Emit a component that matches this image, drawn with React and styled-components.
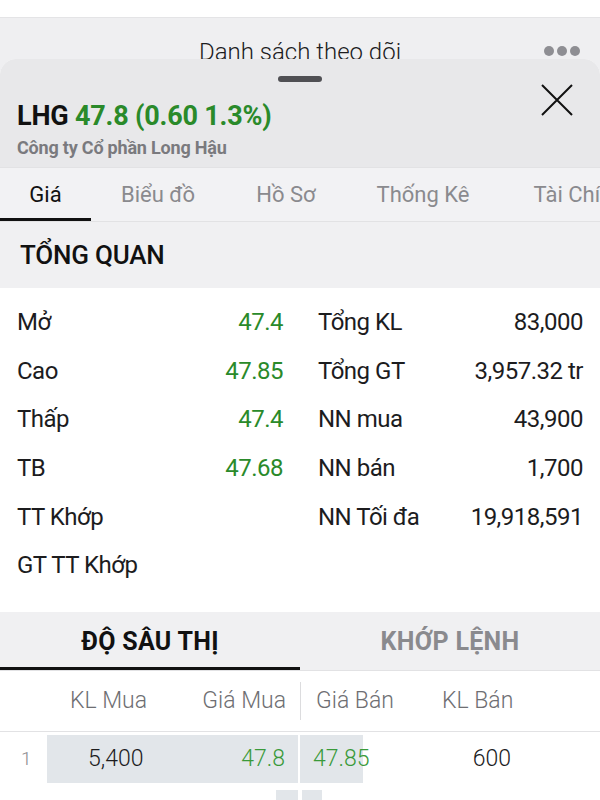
import React from 'react';
import styled, { createGlobalStyle } from 'styled-components';

const GlobalStyle = createGlobalStyle`
  html, body {
    margin: 0;
    padding: 0;
    background: #ffffff;
  }
  body {
    font-family: Roboto, 'Noto Sans', 'Liberation Sans', sans-serif;
    color: #1c1c1e;
    -webkit-font-smoothing: antialiased;
  }
`;

const GREEN = '#2a8a2a';

const Screen = styled.div`
  width: 600px;
  height: 800px;
  overflow: hidden;
  padding-top: 17px;
  box-sizing: border-box;
  background: #ffffff;
`;

const NavBar = styled.div`
  height: 41px;
  background: #efeff1;
  border-top: 1px solid #e4e4e6;
  display: flex;
  align-items: flex-start;
  justify-content: center;
  position: relative;
  overflow: hidden;
`;

const NavTitle = styled.div`
  font-size: 24px;
  font-weight: 300;
  color: #1c1c1e;
  line-height: 1;
  margin-top: 22px;
`;

const MoreDots = styled.div`
  position: absolute;
  right: 20px;
  top: 28px;
  display: flex;
  gap: 3px;
  span {
    width: 10px;
    height: 10px;
    border-radius: 50%;
    background: #8e8e93;
  }
`;

const SheetWrap = styled.div`
  background: #efeff1;
`;

const Sheet = styled.div`
  background: #ffffff;
  border-radius: 16px 16px 0 0;
  overflow: hidden;
`;

const SheetTop = styled.div`
  background: #e8e8ea;
  padding-top: 17px;
`;

const Handle = styled.div`
  width: 44px;
  height: 6px;
  border-radius: 3px;
  background: #505054;
  margin: 0 auto;
`;

const SheetHead = styled.div`
  padding: 18px 17px 7px 17px;
  display: flex;
  justify-content: space-between;
  align-items: flex-start;
`;

const Ticker = styled.div`
  font-size: 27px;
  font-weight: 700;
  line-height: 32px;
  letter-spacing: -0.2px;
  color: #111;
  span {
    color: ${GREEN};
  }
`;

const Company = styled.div`
  font-size: 18px;
  font-weight: 700;
  color: #7a7a7e;
  line-height: 24px;
  margin-top: 4px;
  letter-spacing: -0.2px;
`;

const CloseBtn = styled.button`
  border: 0;
  background: transparent;
  padding: 0;
  margin-top: -17px;
  margin-right: 9px;
  width: 34px;
  height: 34px;
  display: flex;
  align-items: center;
  justify-content: center;
`;

const TabBar = styled.div`
  display: flex;
  background: #f2f2f4;
  border-top: 1px solid #e2e2e4;
  border-bottom: 1px solid #e2e2e4;
  height: 53px;
  white-space: nowrap;
  overflow: hidden;
`;

const Tab = styled.div`
  flex: 0 0 auto;
  width: ${p => p.w}px;
  display: flex;
  align-items: center;
  justify-content: center;
  font-size: 22px;
  font-weight: 400;
  color: ${p => (p.active ? '#111' : '#8a8a8e')};
  box-shadow: ${p => (p.active ? 'inset 0 -3px 0 #111' : 'none')};
`;

const SectionTitle = styled.div`
  background: #f0f0f2;
  height: 66px;
  display: flex;
  align-items: center;
  padding-left: 20px;
  font-size: 26px;
  font-weight: 500;
  color: #111;
  letter-spacing: -0.2px;
`;

const Overview = styled.div`
  background: #fff;
  padding: 10px 17px 22px 17px;
  display: grid;
  grid-template-columns: 266px 1fr;
  column-gap: 35px;
`;

const Column = styled.div`
  display: flex;
  flex-direction: column;
`;

const StatRow = styled.div`
  height: 48.6px;
  display: flex;
  align-items: center;
  justify-content: space-between;
  font-size: 24px;
  font-weight: 400;
  color: #1c1c1e;
  letter-spacing: -0.5px;
`;

const StatValue = styled.span`
  color: ${p => (p.green ? GREEN : '#1c1c1e')};
`;

const DepthTabs = styled.div`
  display: grid;
  grid-template-columns: 300px 1fr;
  background: #f0f0f2;
  height: 58px;
  border-bottom: 1px solid #e2e2e4;
`;

const DepthTab = styled.div`
  display: flex;
  align-items: center;
  justify-content: center;
  font-size: 25px;
  font-weight: 700;
  color: ${p => (p.active ? '#111' : '#8a8a8e')};
  box-shadow: ${p => (p.active ? 'inset 0 -3px 0 #111' : 'none')};
  padding-top: 2px;
  letter-spacing: 0.3px;
`;

const BookHead = styled.div`
  display: grid;
  grid-template-columns: 47px 123px 130px 1px 15px 1fr;
  height: 60px;
  align-items: center;
  border-bottom: 1px solid #e2e2e4;
  font-size: 23px;
  font-weight: 300;
  color: #6e6e72;
`;

const Divider = styled.div`
  width: 1px;
  height: 38px;
  background: #dcdcde;
`;

const HeadCell = styled.div`
  text-align: ${p => p.align || 'left'};
  padding-right: ${p => p.pr || 0}px;
`;

const SellHeads = styled.div`
  display: grid;
  grid-template-columns: 126px 120px;
`;

const BookRow = styled.div`
  display: grid;
  grid-template-columns: 47px 253px 1fr;
  height: 48px;
  margin-top: 3px;
  font-size: 23px;
`;

const Level = styled.div`
  display: flex;
  align-items: center;
  padding-left: 21px;
  font-size: 19px;
  color: #8a8a8e;
  font-weight: 300;
`;

const BuySide = styled.div`
  position: relative;
  display: flex;
  align-items: center;
  justify-content: space-between;
  padding: 0 13px 0 41px;
  border-right: 2px solid #fff;
`;

const SellSide = styled.div`
  position: relative;
  display: grid;
  grid-template-columns: 120px 78px;
  align-items: center;
  padding-left: 13px;
`;

const Bar = styled.div`
  position: absolute;
  top: 0;
  bottom: 0;
  left: 0;
  background: #e2e6ea;
  z-index: 0;
`;

const Cell = styled.span`
  position: relative;
  z-index: 1;
  color: ${p => (p.green ? '#3a9a3a' : '#1c1c1e')};
  text-align: ${p => p.align || 'left'};
  font-weight: 300;
`;

const NextRow = styled.div`
  display: grid;
  grid-template-columns: 276px 22px 4px 20px;
  margin-top: 7px;
  height: 20px;
`;

const NextBar = styled.span`
  grid-column: ${p => p.col};
  background: #e2e6ea;
`;

const CloseIcon = () => (
  <svg width="34" height="34" viewBox="0 0 34 34">
    <path d="M2 2 L32 32 M32 2 L2 32" stroke="#111" strokeWidth="2" fill="none" />
  </svg>
);

const leftStats = [
  ['Mở', '47.4'],
  ['Cao', '47.85'],
  ['Thấp', '47.4'],
  ['TB', '47.68'],
  ['TT Khớp', ''],
  ['GT TT Khớp', '']
];

const rightStats = [
  ['Tổng KL', '83,000'],
  ['Tổng GT', '3,957.32 tr'],
  ['NN mua', '43,900'],
  ['NN bán', '1,700'],
  ['NN Tối đa', '19,918,591']
];

const tabs = [
  ['Giá', 91],
  ['Biểu đồ', 134],
  ['Hồ Sơ', 122],
  ['Thống Kê', 152],
  ['Tài Chính', 160]
];

export default function App() {
  return (
    <Screen>
      <GlobalStyle />
      <NavBar>
        <NavTitle>Danh sách theo dõi</NavTitle>
        <MoreDots>
          <span />
          <span />
          <span />
        </MoreDots>
      </NavBar>
      <SheetWrap>
        <Sheet>
          <SheetTop>
            <Handle />
            <SheetHead>
              <div>
                <Ticker>
                  LHG <span>47.8 (0.60 1.3%)</span>
                </Ticker>
                <Company>Công ty Cổ phần Long Hậu</Company>
              </div>
              <CloseBtn aria-label="close">
                <CloseIcon />
              </CloseBtn>
            </SheetHead>
          </SheetTop>
          <TabBar>
            {tabs.map(([t, w], i) => (
              <Tab key={t} w={w} active={i === 0}>
                {t}
              </Tab>
            ))}
          </TabBar>
          <SectionTitle>TỔNG QUAN</SectionTitle>
          <Overview>
            <Column>
              {leftStats.map(([k, v]) => (
                <StatRow key={k}>
                  <span>{k}</span>
                  <StatValue green>{v}</StatValue>
                </StatRow>
              ))}
            </Column>
            <Column>
              {rightStats.map(([k, v]) => (
                <StatRow key={k}>
                  <span>{k}</span>
                  <StatValue>{v}</StatValue>
                </StatRow>
              ))}
            </Column>
          </Overview>
          <DepthTabs>
            <DepthTab active>ĐỘ SÂU THỊ</DepthTab>
            <DepthTab>KHỚP LỆNH</DepthTab>
          </DepthTabs>
          <BookHead>
            <span />
            <HeadCell align="center">KL Mua</HeadCell>
            <HeadCell align="right" pr={14}>Giá Mua</HeadCell>
            <Divider />
            <span />
            <SellHeads>
              <HeadCell>Giá Bán</HeadCell>
              <HeadCell>KL Bán</HeadCell>
            </SellHeads>
          </BookHead>
          <BookRow>
            <Level>1</Level>
            <BuySide>
              <Bar style={{ right: 0 }} />
              <Cell>5,400</Cell>
              <Cell green align="right">47.8</Cell>
            </BuySide>
            <SellSide>
              <Bar style={{ width: '63px' }} />
              <Cell green>47.85</Cell>
              <Cell align="right">600</Cell>
            </SellSide>
          </BookRow>
          <NextRow>
            <NextBar col={2} />
            <NextBar col={4} />
          </NextRow>
        </Sheet>
      </SheetWrap>
    </Screen>
  );
}
